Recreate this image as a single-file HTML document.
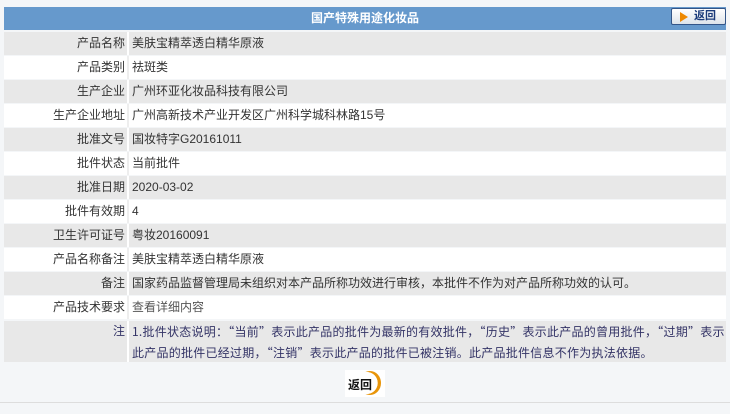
<html><head><style>
body{margin:0;background:#f4f6f8;font-family:"Liberation Sans","Noto Sans CJK SC",sans-serif;font-size:12px;color:#333;width:730px;height:414px;overflow:hidden;position:relative}
.hd{position:absolute;left:4px;top:7px;width:722px;height:23px;background:#6699cc;color:#fff;font-weight:bold;text-align:center;line-height:23px}
.btn{position:absolute;left:671px;top:8px;width:53px;height:15px;border:1px solid #335588;border-radius:2px;background:linear-gradient(#fff,#dde3ea);font-size:11px;font-weight:bold;color:#1a3a7a;line-height:15px}
.btn i{position:absolute;left:8px;top:3px;width:0;height:0;border-left:8px solid #ee8800;border-top:5px solid transparent;border-bottom:5px solid transparent}
.btn span{position:absolute;left:22px}
.r{position:absolute;left:4px;width:722px;height:23px;line-height:23px}
.r .l{position:absolute;left:0;width:121px;text-align:right;height:100%}
.r .v{position:absolute;left:123px;padding-left:3px;height:100%;right:0;border-left:2px solid #fff}
.g{background:#e8e8e8}.w{background:#fff}
.w .v{border-left-color:#eee}
.note{position:absolute;left:4px;top:321px;width:722px;height:41px;background:#e8e8e8;color:#333366;line-height:21px}
.note .l{position:absolute;left:0;width:121px;text-align:right;top:0}
.note .v{position:absolute;left:123px;border-left:2px solid #fff;padding-left:3px;height:100%;right:0;font-family:"Noto Sans CJK SC",sans-serif;letter-spacing:0.25px;white-space:nowrap}
.ret{position:absolute;left:345px;top:370px;width:40px;height:27px;background:#fff}
.ret .c{position:absolute;left:14px;top:1px;width:22px;height:24px;border-radius:50%;background:radial-gradient(circle at 35% 50%,#fff 58%,#e8950a 60%)}
.ret b{position:absolute;left:3px;top:6px;font-size:12px;color:#111}
.line{position:absolute;left:0;top:402px;width:730px;height:1px;background:#ddd}
</style></head><body>
<div class="hd">国产特殊用途化妆品</div>
<div class="btn"><i></i><span>返回</span></div>
<div class="r g" style="top:32px"><div class="l">产品名称</div><div class="v">美肤宝精萃透白精华原液</div></div>
<div class="r w" style="top:56px"><div class="l">产品类别</div><div class="v">祛斑类</div></div>
<div class="r g" style="top:80px"><div class="l">生产企业</div><div class="v">广州环亚化妆品科技有限公司</div></div>
<div class="r w" style="top:104px"><div class="l">生产企业地址</div><div class="v">广州高新技术产业开发区广州科学城科林路15号</div></div>
<div class="r g" style="top:128px"><div class="l">批准文号</div><div class="v">国妆特字G20161011</div></div>
<div class="r w" style="top:152px"><div class="l">批件状态</div><div class="v">当前批件</div></div>
<div class="r g" style="top:176px"><div class="l">批准日期</div><div class="v">2020-03-02</div></div>
<div class="r w" style="top:200px"><div class="l">批件有效期</div><div class="v">4</div></div>
<div class="r g" style="top:224px"><div class="l">卫生许可证号</div><div class="v">粤妆20160091</div></div>
<div class="r w" style="top:248px"><div class="l">产品名称备注</div><div class="v">美肤宝精萃透白精华原液</div></div>
<div class="r g" style="top:272px"><div class="l">备注</div><div class="v">国家药品监督管理局未组织对本产品所称功效进行审核，本批件不作为对产品所称功效的认可。</div></div>
<div class="r w" style="top:296px"><div class="l">产品技术要求</div><div class="v" style="color:#555">查看详细内容</div></div>
<div class="note"><div class="l">注</div><div class="v">1.批件状态说明：“当前”表示此产品的批件为最新的有效批件，“历史”表示此产品的曾用批件，“过期”表示<br>此产品的批件已经过期，“注销”表示此产品的批件已被注销。此产品批件信息不作为执法依据。</div></div>
<div class="ret"><div class="c"></div><b>返回</b></div>
<div class="line"></div>
</body></html>
